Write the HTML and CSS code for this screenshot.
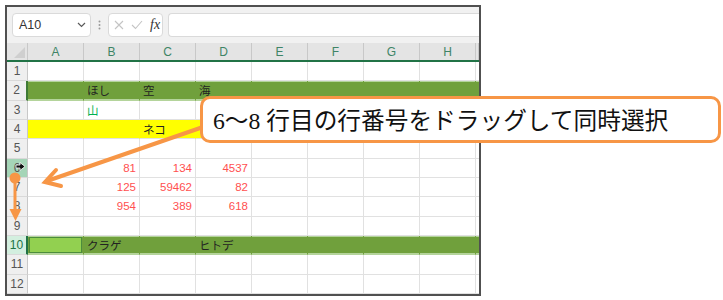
FILE: index.html
```html
<!DOCTYPE html>
<html lang="ja">
<head>
  <meta charset="UTF-8">
  <title>行番号のドラッグ選択</title>
  <link rel="stylesheet" href="styles.css">
</head>
<body>

  <div class="frame">
    <div class="toolbar">
      <div class="namebox">
        <span>A10</span>
        <svg class="chev" width="9" height="6" viewBox="0 0 9 6"><path d="M1 1 L4.5 4.5 L8 1" fill="none" stroke="#5a5a5a" stroke-width="1.2"/></svg>
      </div>
      <div class="dots">
        <svg width="3" height="10" viewBox="0 0 3 10"><circle cx="1.5" cy="1.5" r="1" fill="#9a9a9a"/><circle cx="1.5" cy="5" r="1" fill="#9a9a9a"/><circle cx="1.5" cy="8.5" r="1" fill="#9a9a9a"/></svg>
      </div>
      <div class="fxbox">
        <svg width="10" height="10" viewBox="0 0 10 10"><path d="M1 1 L9 9 M9 1 L1 9" stroke="#c4c4c4" stroke-width="1.1"/></svg>
        <svg width="12" height="10" viewBox="0 0 12 10"><path d="M1 5 L4.5 8.5 L11 1" fill="none" stroke="#c4c4c4" stroke-width="1.1"/></svg>
        <span class="fx">fx</span>
      </div>
      <div class="formula"></div>
    </div>

    <div class="sheet">
      <div class="row head">
        <div class="corner"></div>
        <div class="ch">A</div><div class="ch">B</div><div class="ch">C</div><div class="ch">D</div>
        <div class="ch">E</div><div class="ch">F</div><div class="ch">G</div><div class="ch">H</div>
        <div class="ch"></div>
      </div>

      <div class="rows">
        <div class="row">
          <div class="rh">1</div>
          <div class="c"></div><div class="c"></div><div class="c"></div><div class="c"></div>
          <div class="c"></div><div class="c"></div><div class="c"></div><div class="c"></div><div class="c"></div>
        </div>
        <div class="row band">
          <div class="rh">2</div>
          <div class="c"></div><div class="c">ほし</div><div class="c">空</div><div class="c">海</div>
          <div class="c"></div><div class="c"></div><div class="c"></div><div class="c"></div><div class="c"></div>
        </div>
        <div class="row">
          <div class="rh">3</div>
          <div class="c"></div><div class="c green">山</div><div class="c"></div><div class="c"></div>
          <div class="c"></div><div class="c"></div><div class="c"></div><div class="c"></div><div class="c"></div>
        </div>
        <div class="row yellow">
          <div class="rh">4</div>
          <div class="c"></div><div class="c"></div><div class="c">ネコ</div><div class="c"></div>
          <div class="c"></div><div class="c"></div><div class="c"></div><div class="c"></div><div class="c"></div>
        </div>
        <div class="row">
          <div class="rh">5</div>
          <div class="c"></div><div class="c"></div><div class="c"></div><div class="c"></div>
          <div class="c"></div><div class="c"></div><div class="c"></div><div class="c"></div><div class="c"></div>
        </div>
        <div class="row">
          <div class="rh drag">6</div>
          <div class="c"></div><div class="c num">81</div><div class="c num">134</div><div class="c num">4537</div>
          <div class="c"></div><div class="c"></div><div class="c"></div><div class="c"></div><div class="c"></div>
        </div>
        <div class="row">
          <div class="rh">7</div>
          <div class="c"></div><div class="c num">125</div><div class="c num">59462</div><div class="c num">82</div>
          <div class="c"></div><div class="c"></div><div class="c"></div><div class="c"></div><div class="c"></div>
        </div>
        <div class="row">
          <div class="rh">8</div>
          <div class="c"></div><div class="c num">954</div><div class="c num">389</div><div class="c num">618</div>
          <div class="c"></div><div class="c"></div><div class="c"></div><div class="c"></div><div class="c"></div>
        </div>
        <div class="row">
          <div class="rh">9</div>
          <div class="c"></div><div class="c"></div><div class="c"></div><div class="c"></div>
          <div class="c"></div><div class="c"></div><div class="c"></div><div class="c"></div><div class="c"></div>
        </div>
        <div class="row band">
          <div class="rh sel">10</div>
          <div class="c tight"><div class="active"></div></div><div class="c">クラゲ</div><div class="c"></div><div class="c">ヒトデ</div>
          <div class="c"></div><div class="c"></div><div class="c"></div><div class="c"></div><div class="c"></div>
        </div>
        <div class="row">
          <div class="rh">11</div>
          <div class="c"></div><div class="c"></div><div class="c"></div><div class="c"></div>
          <div class="c"></div><div class="c"></div><div class="c"></div><div class="c"></div><div class="c"></div>
        </div>
        <div class="row">
          <div class="rh">12</div>
          <div class="c"></div><div class="c"></div><div class="c"></div><div class="c"></div>
          <div class="c"></div><div class="c"></div><div class="c"></div><div class="c"></div><div class="c"></div>
        </div>
      </div>
    </div>
  </div>

  <!-- 行選択カーソル -->
  <svg class="cursor" width="11" height="11" viewBox="0 0 11 11">
    <path d="M1 4 H5 V1.5 L10 5.5 L5 9.5 V7 H1 Z" fill="#111" stroke="#fff" stroke-width="0.8"/>
  </svg>

  <!-- 矢印 -->
  <svg class="arrows" width="723" height="300" viewBox="0 0 723 300">
    <g stroke="#f79646" stroke-width="4" stroke-linecap="round" fill="none">
      <path d="M203 127 L47 181"/>
      <path d="M56 170 L45 182 L61 186"/>
    </g>
    <path d="M15 178 V212" stroke="#f79646" stroke-width="3"/>
    <circle cx="15" cy="178" r="5.5" fill="#f79646"/>
    <path d="M9.5 209 H21.5 L15.5 221 Z" fill="#f79646"/>
  </svg>

  <div class="callout">6～8 行目の行番号をドラッグして同時選択</div>

</body>
</html>
```

FILE: styles.css
```css
    body {
      margin: 0;
      padding: 5px 0 0 5px;
      position: relative;
      width: 723px;
      height: 300px;
      box-sizing: border-box;
      overflow: hidden;
      background: #fff;
      font-family: 'Liberation Sans', 'Noto Sans CJK JP', sans-serif;
    }

    .frame {
      width: 476px;
      height: 291px;
      box-sizing: border-box;
      border: 2px solid #505050;
      overflow: hidden;
      background: #fff;
    }

    /* 数式バー */
    .toolbar {
      height: 36px;
      box-sizing: border-box;
      padding: 6px 0 0 5px;
      display: flex;
      align-items: flex-start;
      background: #f1f1f1;
    }

    .namebox {
      width: 79px;
      height: 24px;
      box-sizing: border-box;
      border: 1px solid #dadada;
      border-radius: 4px;
      background: #fff;
      display: flex;
      align-items: center;
      justify-content: space-between;
      padding: 0 4px 0 6px;
      font-size: 12.5px;
      color: #333;
    }

    .dots {
      width: 17px;
      height: 24px;
      display: flex;
      align-items: center;
      justify-content: center;
    }

    .fxbox {
      width: 55px;
      height: 24px;
      box-sizing: border-box;
      border: 1px solid #dadada;
      border-radius: 4px;
      background: #fff;
      display: flex;
      align-items: center;
      gap: 7px;
      padding-left: 5px;
    }

    .fx {
      font-family: 'Liberation Serif', serif;
      font-style: italic;
      font-size: 14px;
      color: #333;
    }

    .formula {
      flex: 1;
      height: 24px;
      margin-left: 5px;
      box-sizing: border-box;
      border: 1px solid #dadada;
      border-right: none;
      border-radius: 4px 0 0 4px;
      background: #fff;
    }

    /* シート */
    .row {
      display: grid;
      grid-template-columns: 21px repeat(8, 56px) 1fr;
    }

    .head {
      height: 19px;
      box-sizing: border-box;
      border-bottom: 2px solid #217346;
      background: #e4e4e4;
    }

    .corner {
      position: relative;
      border-right: 1px solid #c8c8c8;
    }

    .corner::after {
      content: "";
      position: absolute;
      right: 2px;
      bottom: 2px;
      width: 11px;
      height: 11px;
      background: #cfcfcf;
      clip-path: polygon(100% 0, 100% 100%, 0 100%);
    }

    .ch {
      border-right: 1px solid #c8c8c8;
      display: flex;
      align-items: center;
      justify-content: center;
      font-size: 12px;
      color: #3e8466;
    }

    .rows {
      height: 232px;
      display: grid;
      grid-template-rows: repeat(12, 1fr);
    }

    .rh {
      background: #efefef;
      border-right: 1px solid #c8c8c8;
      border-bottom: 1px solid #d9d9d9;
      display: flex;
      align-items: center;
      justify-content: center;
      font-size: 12px;
      color: #555;
    }

    .rh.drag {
      background: #a5d5b7;
    }

    .rh.sel {
      background: #d3efdf;
      color: #217346;
      border-right: 2px solid #217346;
    }

    .c {
      border-right: 1px solid #e1e1e1;
      border-bottom: 1px solid #e1e1e1;
      display: flex;
      align-items: center;
      padding: 0 3px;
      font-size: 11.5px;
      color: #222;
      white-space: nowrap;
      min-width: 0;
    }

    .c.tight {
      padding: 0 1px 0 1px;
    }

    .c.num {
      justify-content: flex-end;
      color: #ff4f4f;
    }

    .c.green {
      color: #00b050;
    }

    .band .c {
      background: #70a03c;
      border-right-color: #70a03c;
      border-bottom-color: #b4d49b;
      box-shadow: inset 0 1px #b4d49b, inset 0 -1px #b4d49b;
    }

    .band .rh:not(.sel) {
      border-right: 2px solid #3f7a35;
    }

    .yellow .c {
      background: #ffff00;
      border-right-color: #ffff00;
    }

    .active {
      width: 100%;
      height: 16px;
      box-sizing: border-box;
      background: #92d050;
      border: 1.5px solid #4c8c3c;
    }

    /* 重ねる注釈 */
    .cursor {
      position: absolute;
      left: 15px;
      top: 161px;
    }

    .arrows {
      position: absolute;
      left: 0;
      top: 0;
    }

    .callout {
      position: absolute;
      left: 200px;
      top: 96px;
      width: 521px;
      height: 47px;
      box-sizing: border-box;
      border: 3px solid #f79646;
      border-radius: 10px;
      background: #fff;
      padding: 0 0 2px 10px;
      display: flex;
      align-items: center;
      font-family: 'Liberation Serif', 'Noto Sans CJK JP', serif;
      font-size: 23.7px;
      color: #111;
      white-space: nowrap;
    }
```
